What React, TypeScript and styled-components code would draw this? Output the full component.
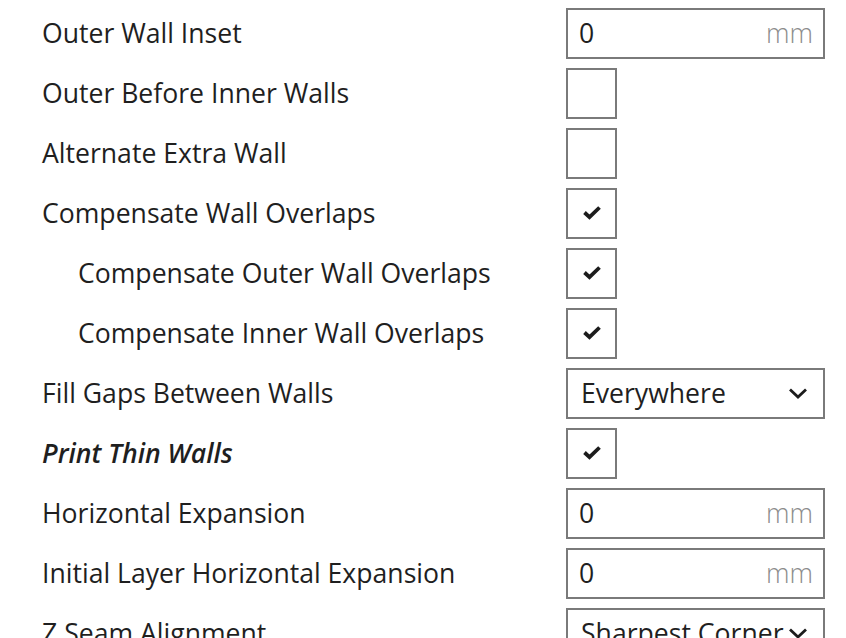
import React from "react";
import styled, { createGlobalStyle } from "styled-components";

const Global = createGlobalStyle`
  html, body { margin: 0; padding: 0; background: #fff; overflow: hidden; }
  body { font-family: "Open Sans", "Liberation Sans", sans-serif; color: #1f1f1f; }
`;

const Page = styled.div`
  width: 846px;
  height: 638px;
  overflow: hidden;
  padding-top: 3px;
  box-sizing: border-box;
`;

const Row = styled.div`
  display: flex;
  align-items: center;
  height: 60px;
  padding-right: 21px;
`;

const Label = styled.div<{ $indent?: boolean; $emph?: boolean }>`
  flex: 1;
  padding-left: ${(p) => (p.$indent ? 78 : 42)}px;
  font-size: 26.6px;
  font-weight: ${(p) => (p.$emph ? 600 : 400)};
  font-style: ${(p) => (p.$emph ? "italic" : "normal")};
  white-space: nowrap;
  margin-top: -1px;
`;

const Control = styled.div`
  width: 259px;
  display: flex;
`;

const Field = styled.div`
  box-sizing: border-box;
  width: 259px;
  height: 51px;
  border: 2px solid #7a7a7a;
  display: flex;
  align-items: center;
  justify-content: space-between;
  padding: 0 10px 0 11px;
  font-size: 26.6px;
  overflow: hidden;
`;

const Unit = styled.span`
  color: #8c8c8c;
  font-weight: 300;
`;

const Box = styled.div`
  box-sizing: border-box;
  width: 51px;
  height: 51px;
  border: 2px solid #7a7a7a;
  display: flex;
  align-items: center;
  justify-content: center;
`;

const Select = styled(Field)`
  padding: 0 15px 0 13px;
`;

const SelectText = styled.span`
  white-space: nowrap;
`;

const Check = () => (
  <svg width="20" height="16" viewBox="0 0 20 16">
    <path d="M2.5 7.5 L7.5 12.2 L17.5 2.5" fill="none" stroke="#1c1c1c" strokeWidth="3.8" strokeLinecap="butt" strokeLinejoin="miter" />
  </svg>
);

const Chevron = () => (
  <svg width="20" height="13" viewBox="0 0 20 13" style={{ flexShrink: 0 }}>
    <path d="M2 2.5 L10 10 L18 2.5" fill="none" stroke="#1c1c1c" strokeWidth="2.8" />
  </svg>
);

type Setting =
  | { label: string; indent?: boolean; emph?: boolean; kind: "num"; value: string }
  | { label: string; indent?: boolean; emph?: boolean; kind: "check"; checked: boolean }
  | { label: string; indent?: boolean; emph?: boolean; kind: "select"; value: string };

const settings: Setting[] = [
  { label: "Outer Wall Inset", kind: "num", value: "0" },
  { label: "Outer Before Inner Walls", kind: "check", checked: false },
  { label: "Alternate Extra Wall", kind: "check", checked: false },
  { label: "Compensate Wall Overlaps", kind: "check", checked: true },
  { label: "Compensate Outer Wall Overlaps", indent: true, kind: "check", checked: true },
  { label: "Compensate Inner Wall Overlaps", indent: true, kind: "check", checked: true },
  { label: "Fill Gaps Between Walls", kind: "select", value: "Everywhere" },
  { label: "Print Thin Walls", emph: true, kind: "check", checked: true },
  { label: "Horizontal Expansion", kind: "num", value: "0" },
  { label: "Initial Layer Horizontal Expansion", kind: "num", value: "0" },
  { label: "Z Seam Alignment", kind: "select", value: "Sharpest Corner" },
];

export default function App() {
  return (
    <>
      <Global />
      <Page>
        {settings.map((s) => (
          <Row key={s.label}>
            <Label $indent={s.indent} $emph={s.emph}>{s.label}</Label>
            <Control>
              {s.kind === "num" && (
                <Field>
                  <span>{s.value}</span>
                  <Unit>mm</Unit>
                </Field>
              )}
              {s.kind === "check" && <Box>{s.checked && <Check />}</Box>}
              {s.kind === "select" && (
                <Select>
                  <SelectText>{s.value}</SelectText>
                  <Chevron />
                </Select>
              )}
            </Control>
          </Row>
        ))}
      </Page>
    </>
  );
}
